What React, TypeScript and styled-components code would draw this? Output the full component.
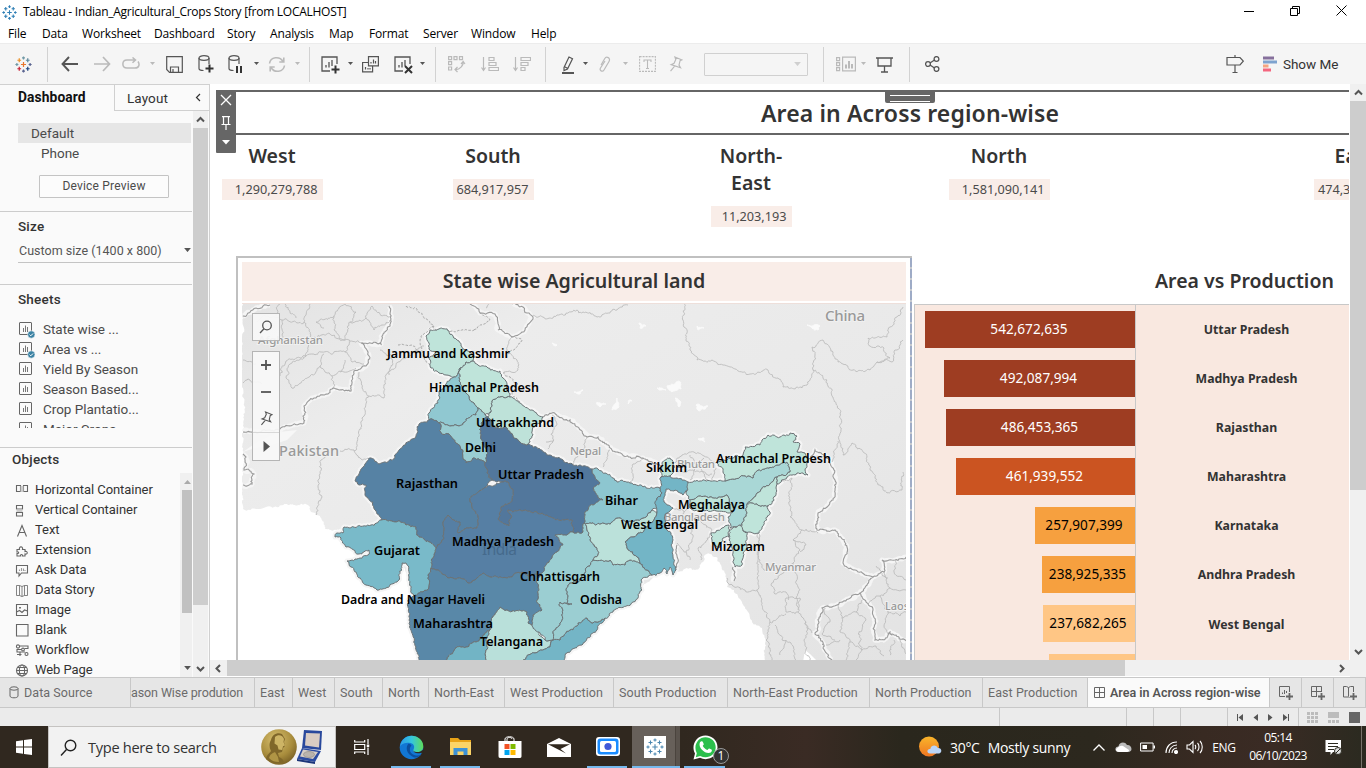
import React from 'react';
import styled, { createGlobalStyle } from 'styled-components';

const Global = createGlobalStyle`
  * { box-sizing: border-box; }
  html, body { margin: 0; padding: 0; width: 1366px; height: 768px; overflow: hidden; background: #fff; }
  svg { display: block; flex: none; }
`;

const UI = `'Open Sans', 'Noto Sans', sans-serif`;
const BENTON = `Roboto, Inter, sans-serif`;
const BOOK = `'Noto Sans', 'Open Sans', sans-serif`;

const Screen = styled.div`
  width: 1366px; height: 768px; display: flex; flex-direction: column; overflow: hidden;
  background: #fff; font-family: ${BENTON}; color: #333;
`;

/* ---------- title bar and menu ---------- */
const TitleBar = styled.header`
  height: 24px; display: flex; align-items: center; padding-left: 2px; font: 12px/24px ${UI}; color: #000;
`;
const TitleText = styled.div`
  margin-left: 6px; letter-spacing: -.27px; white-space: nowrap; flex: 1;
`;
const WindowButtons = styled.div`display: flex; align-items: center; height: 20px; padding: 0 2px 3px 0;`;
const WindowButton = styled.div`width: 46px; display: flex; justify-content: center;`;
const MenuBar = styled.nav`height: 19px; display: flex; font: 12px/19px ${UI}; color: #000; padding-left: 8px;`;
const MenuItem = styled.span<{ $w: number }>`
  width: ${p => p.$w}px; white-space: nowrap; letter-spacing: -0.15px;
`;

/* ---------- toolbar ---------- */
const ToolBar = styled.div`
  height: 41px; background: #f5f5f5; border-top: 1px solid #ececec; display: flex; align-items: center; color: #666;
`;
const ToolSlot = styled.div<{ $w: number; $faint?: boolean }>`
  width: ${p => p.$w}px; display: flex; justify-content: center; color: ${p => (p.$faint ? '#bababa' : '#555')}; flex: none;
`;
const ToolSep = styled.div`width: 1px; height: 35px; background: #d2d2d2; flex: none;`;
const ToolCombo = styled.div`
  width: 104px; height: 23px; border: 1px solid #d0d0d0; border-radius: 1px; display: flex; align-items: center;
  justify-content: flex-end; padding-right: 6px; margin: 0 15px 0 21px; color: #cfcfcf;
`;
const ShowMe = styled.div`font: 13.5px ${BENTON}; color: #333; letter-spacing: -.05px; width: 54px; white-space: nowrap;`;

/* ---------- body ---------- */
const Body = styled.div`height: 593px; display: flex; overflow: hidden;`;
const Side = styled.aside`
  width: 210px; height: 593px; background: #fafafa; border-top: 1px solid #d0d0d0; border-right: 1px solid #d0d0d0;
  display: flex; flex-direction: column; flex: none;
`;
const SideTabs = styled.div`height: 26px; display: flex;`;
const SideTab = styled.div<{ $active?: boolean }>`
  width: ${p => (p.$active ? 114 : 95)}px; padding-left: ${p => (p.$active ? 18 : 12)}px; height: 26px;
  font: ${p => (p.$active ? 'bold 13.8px' : 'normal 13.5px')}/24px ${BENTON}; color: ${p => (p.$active ? '#111' : '#333')};
  border-left: ${p => (p.$active ? 0 : 1)}px solid #d0d0d0; border-bottom: ${p => (p.$active ? 0 : 1)}px solid #d0d0d0;
  display: flex; justify-content: space-between; align-items: center; padding-right: 6px; letter-spacing: .1px;
  padding-bottom: ${p => (p.$active ? 2 : 0)}px;
`;
const SideScroll = styled.div`flex: 1; display: flex; min-height: 0;`;
const SideMain = styled.div`width: 192px; margin-right: 1px; display: flex; flex-direction: column; min-height: 0; height: 566px; overflow: hidden;`;
const VTrack = styled.div<{ $w: number }>`
  width: ${p => p.$w}px; background: #f0f0f0; display: flex; flex-direction: column; align-items: center; color: #555;
  flex: none;
`;
const VArrow = styled.div<{ $h: number }>`height: ${p => p.$h}px; display: flex; align-items: center; justify-content: center;`;
const VThumb = styled.div<{ $h: number; $c?: string }>`width: 100%; height: ${p => p.$h}px; background: ${p => p.$c ?? '#cdcdcd'};`;
const Grow = styled.div`flex: 1;`;

const DevicePane = styled.div`height: 101px; padding: 12px 1px 0 18px; border-bottom: 1px solid #ccc; flex: none;`;
const DeviceRow = styled.div<{ $on?: boolean }>`
  height: 20px; font: 13.5px/20px ${BENTON}; color: #4b4b4b; padding-left: ${p => (p.$on ? 13 : 23)}px;
  background: ${p => (p.$on ? '#e6e6e6' : 'transparent')};
`;
const PreviewButton = styled.div`
  width: 130px; height: 23px; margin: 12px 0 0 21px; border: 1px solid #c4c4c4; border-radius: 1px; background: #fcfcfc;
  font: 12px/20px ${BENTON}; color: #4b4b4b; text-align: center; letter-spacing: .2px;
`;
const SideHeading = styled.div`font: 500 13.5px/18px ${BENTON}; color: #333; letter-spacing: .2px;`;
const SizePane = styled.div`height: 73px; padding: 5px 1px 0 18px; border-bottom: 1px solid #ccc; flex: none;`;
const SizeSelect = styled.div`
  height: 25px; margin-top: 3px; border-bottom: 1px solid #c4c4c4; display: flex; align-items: center;
  justify-content: space-between; font: 12.5px ${BENTON}; color: #555; padding-left: 1px; letter-spacing: .02px;
`;
const SheetsPane = styled.div`height: 163px; padding: 5px 0 0 18px; border-bottom: 1px solid #ccc; flex: none;`;
const SheetList = styled.div`margin-top: 11px; height: 109px; overflow: hidden;`;
const SheetRow = styled.div`
  height: 20px; display: flex; align-items: center; font: 13.5px/20px ${BENTON}; color: #4b4b4b; white-space: nowrap;
  letter-spacing: -.03px;
  & > svg { margin: 0 8px 0 1px; }
`;
const ObjectsPane = styled.div`flex: 1; display: flex; min-height: 0;`;
const ObjectCol = styled.div`width: 180px; padding: 2px 0 0 12px;`;
const ObjectList = styled.div`margin-top: 12px;`;
const ObjectRow = styled.div`
  height: 20px; display: flex; align-items: center; font: 13px/20px ${BENTON}; color: #333; white-space: nowrap;
  letter-spacing: -.06px;
  & > svg { margin: 0 5px 0 3px; }
`;
const ObjectTrack = styled(VTrack)`margin-top: 25px; padding-left: 2px;`;

/* ---------- dashboard ---------- */
const Center = styled.main`width: 1140px; height: 593px; display: flex; flex-direction: column;`;
const Canvas = styled.div`height: 576px; width: 1139px; overflow: hidden; position: relative; background: #fff; display: flex; flex-direction: column;`;
const DashTitle = styled.h1`
  margin: 6px 0 0 26px; height: 45px; border-top: 2px solid #666; border-bottom: 2px solid #666;
  font: 600 23px/42px ${BOOK}; color: #333; flex: none; padding-left: 525px; white-space: nowrap; letter-spacing: .12px;
`;
const Controls = styled.div`
  position: absolute; left: 6px; top: 6px; width: 20px; height: 63px; background: #666; border-radius: 0 0 1px 1px;
  display: flex; flex-direction: column; align-items: center; justify-content: space-between; padding: 4px 1px 8px 0;
`;
const Handle = styled.div`
  position: absolute; left: 675px; top: 6px; width: 50px; height: 13px; background: #666; border-radius: 0 0 2px 2px;
  padding: 5px 5px 0; &::before { content: ''; display: block; height: 5px; border: solid #fff; border-width: 1px 0; }
`;
const Regions = styled.div`display: grid; grid-template-columns: 124px 318px 198px 298px 413px; height: 121px; flex: none; padding-top: 7px;`;
const Region = styled.div`display: flex; flex-direction: column; align-items: center;`;
const RegionName = styled.h2`
  margin: 0 0 10px; font: 600 19.5px/27px ${BOOK}; color: #333; text-align: center; max-width: 84px;
`;
const RegionValue = styled.div<{ $w: number }>`
  width: ${p => p.$w}px; height: 21px; background: #f9ede8; text-align: right; padding-right: 5px;
  font: 12.7px/21px ${BOOK}; color: #4b4b4b;
`;
const Panels = styled.div`display: flex; height: 404px; flex: none;`;
const MapPanel = styled.section`
  width: 676px; margin-left: 26px; border: 2px solid #c0c0c0; border-right: 0; border-bottom: 0; padding: 4px 6px 0 4px;
  background: repeating-linear-gradient(#9eabc6 0 9px, #c6c9ce 9px 11px) right / 2px 100% no-repeat;
`;
const MapTitle = styled.h3`
  margin: 0 0 2px; height: 39px; background: #f9ede8; font: 600 19.6px/38px ${BOOK}; text-align: center; color: #333;
`;
const MapFrame = styled.div`border-top: 1px solid #eedfda; position: relative; height: 358px;`;
const MapTools = styled.div<{ $top: number; $h: number }>`
  position: absolute; left: 10px; top: ${p => p.$top}px; width: 28px; height: ${p => p.$h}px; border: 1px solid #b5b5b5;
  background: rgba(247,247,247,.93); display: flex; flex-direction: column; align-items: center; justify-content: space-around;
  color: #555;
`;
const MapTool = styled.div<{ $line?: boolean }>`
  width: 26px; flex: 1; display: flex; align-items: center; justify-content: center;
  border-top: ${p => (p.$line ? '1px solid #d8d8d8' : '0')};
`;
const ChartPanel = styled.section`width: 447px; margin-left: 2px; flex: none; overflow: hidden;`;
const ChartTitle = styled.h3`
  margin: 0; height: 48px; padding: 4px 0 0 241px; font: 600 19.5px/42px ${BOOK}; color: #333; white-space: nowrap;
`;
const Chart = styled.div`border: solid #c8c8c8; border-width: 1px 0 0 1px; background: #f9e8e0; height: 360px;`;
const BarRow = styled.div`height: 49.1px; display: flex;`;
const BarCell = styled.div`
  width: 221px; border-right: 1px solid #c8c8c8; display: flex; justify-content: flex-end; align-items: center; padding-bottom: 1px;
`;
const Bar = styled.div<{ $w: number; $c: string; $dark?: boolean }>`
  width: ${p => p.$w}px; height: 37px; background: ${p => p.$c}; color: ${p => (p.$dark ? '#000' : '#fff')};
  font: 13.6px/36px ${BOOK}; text-align: center; padding-right: 2px;
`;
const BarLabel = styled.div`width: 221px; text-align: center; font: bold 12.3px/49px ${BOOK}; color: #333;`;

const HScroll = styled.div`height: 17px; background: #fff; display: flex; color: #555; width: 1140px;`;
const HArrow = styled.div<{ $w: number }>`width: ${p => p.$w}px; height: 16px; background: #f0f0f0; display: flex; align-items: center; justify-content: center;`;
const HThumb = styled.div`width: 898px; height: 16px; background: #cdcdcd;`;
const HTrack = styled.div`flex: 1; height: 16px; background: #f0f0f0;`;

/* ---------- sheet tabs and status ---------- */
const SheetTabs = styled.div`
  height: 31px; background: #e6e6e6; border-top: 1px solid #c8c8c8; border-bottom: 1px solid #c8c8c8; display: flex; flex: none;
`;
const SheetTab = styled.div<{ $w: number; $on?: boolean; $clip?: boolean; $src?: boolean }>`
  width: ${p => p.$w}px; border-right: 1px solid #c8c8c8; background: ${p => (p.$on ? '#fafafa' : '#e6e6e6')};
  font: ${p => (p.$on ? '600 12.5px' : '12.5px')}/30px ${BENTON}; color: ${p => (p.$on ? '#555' : '#6b6b6b')}; white-space: nowrap; overflow: hidden;
  display: flex; align-items: center; padding-left: ${p => (p.$src ? 9 : p.$clip ? 0 : p.$on ? 6 : 5)}px; gap: 5px; flex: none;
  letter-spacing: ${p => (p.$on ? 0 : p.$clip ? -0.1 : 0.07)}px;
`;
const AddTab = styled.div<{ $w: number }>`width: ${p => p.$w}px; border-right: 1px solid #c8c8c8; display: flex; align-items: center; justify-content: center; flex: none;`;
const Status = styled.div`height: 18px; background: #ebebeb; display: flex; flex: none;`;
const StatusCell = styled.div<{ $w: number }>`
  width: ${p => p.$w}px; border-right: 1px solid #c8c8c8; display: flex; align-items: center; justify-content: center; flex: none; gap: 10px;
`;

/* ---------- windows taskbar ---------- */
const TaskBar = styled.footer`
  height: 42px; display: flex; color: #fff; flex: none; font-family: ${UI};
  background: linear-gradient(90deg, #30281f 0%, #30281f 50%, #3a2b24 59%, #2a271d 66%, #2c281e 80%, #382a22 88%, #3a2b24 93%, #2b2a20 100%);
`;
const TaskItem = styled.div<{ $w: number; $run?: boolean; $on?: boolean }>`
  width: ${p => p.$w}px; display: flex; align-items: center; justify-content: center; flex: none; position: relative;
  background: ${p => (p.$on ? 'linear-gradient(90deg,#67605a 0 43px,#4b443e 43px 44px,#5a534d 44px)' : 'transparent')};
  &::after { content: ''; display: ${p => (p.$run ? 'block' : 'none')}; position: absolute; bottom: 0; left: ${p => (p.$on ? 0 : 4)}px;
    right: ${p => (p.$on ? 0 : 5)}px; height: 2px; background: #76b9ed; }
`;
const SearchBox = styled.div`
  width: 288px; height: 42px; border: 1px solid #c5c3c1; background: #f2f2f2; display: flex; align-items: center; color: #333;
  font: 14.6px ${UI}; padding: 0 3px 0 11px;
`;
const SearchText = styled.span`flex: 1; margin-left: 11px; letter-spacing: -.3px;`;
const Badge = styled.div`
  position: absolute; right: 1px; bottom: 4px; width: 16px; height: 16px; border-radius: 50%; border: 1px solid #999; background: #333;
  font: 12px/14px ${UI}; text-align: center; color: #fff;
`;
const Weather = styled.div`width: 184px; margin-left: 173px; display: flex; align-items: center; font-size: 14px; padding-left: 16px; gap: 8px; flex: none; letter-spacing: -.3px; white-space: nowrap;`;
const TrayText = styled.div`width: 38px; text-align: center; font-size: 12px; line-height: 43px; letter-spacing: -.3px; flex: none;`;
const Clock = styled.div`width: 70px; text-align: center; font: 12px/18px ${UI}; letter-spacing: -.6px; padding-top: 3px; flex: none;`;
const PeekLine = styled.div`width: 5px; border-left: 1px solid #77736b; margin-left: auto;`;

/* ---------- icons ---------- */
const Caret = ({ s = 6 }: { s?: number }) => (
  <svg width={s} height={s / 2 + 1} viewBox="0 0 6 4"><path d="M0 0h6L3 3.6z" fill="currentColor" /></svg>
);
const Cross = ({ x, y, r, c, w = 1.2 }: { x: number; y: number; r: number; c: string; w?: number }) => (
  <path d={`M${x - r} ${y}h${r * 2}M${x} ${y - r}v${r * 2}`} stroke={c} strokeWidth={w} />
);
const TableauMark = ({ size, mono, w = 1.2 }: { size: number; mono?: string; w?: number }) => {
  const c = (v: string) => mono ?? v;
  return (
    <svg width={size} height={size} viewBox="0 0 18 18">
      <Cross x={9} y={9} r={2.7} c={c('#e8762d')} w={w} />
      <Cross x={9} y={2} r={1.6} c={c('#7199a6')} w={w} />
      <Cross x={9} y={16} r={1.6} c={c('#5b6591')} w={w} />
      <Cross x={2} y={9} r={1.6} c={c('#7199a6')} w={w} />
      <Cross x={16} y={9} r={1.6} c={c('#5b6591')} w={w} />
      <Cross x={4.5} y={4.5} r={2} c={c('#eb9129')} w={w} />
      <Cross x={13.5} y={4.5} r={2} c={c('#5b879b')} w={w} />
      <Cross x={4.5} y={13.5} r={2} c={c('#c72035')} w={w} />
      <Cross x={13.5} y={13.5} r={2} c={c('#1f447e')} w={w} />
    </svg>
  );
};
type Kids = { w?: number; h?: number; sw?: number; children: React.ReactNode };
const Line = ({ w = 18, h = 18, sw = 1.2, children }: Kids) => (
  <svg width={w} height={h} viewBox={`0 0 ${w} ${h}`} fill="none" stroke="currentColor" strokeWidth={sw}>{children}</svg>
);
const PinShape = ({ size = 13 }: { size?: number }) => (
  <svg width={size} height={size * 1.15} viewBox="0 0 13 15" fill="none" stroke="currentColor" strokeWidth="1.1">
    <path d="M5.500 1l6.500 2.600-1.700.8-1 4.100 1.400 2.400L2 8l2.700-1.200 1.600-3.600zM5.200 9.400L1.400 14" />
  </svg>
);
const Chevron = ({ d, s = 2 }: { d: 'u' | 'd' | 'l' | 'r'; s?: number }) => {
  const p = { u: 'M1 6.5L4.5 3 8 6.5', d: 'M1 3l3.500 3.500L8 3', l: 'M6 1L2.500 4.500 6 8', r: 'M3 1l3.500 3.500L3 8' }[d];
  return <svg width="9" height="9" viewBox="0 0 9 9" fill="none" stroke="currentColor" strokeWidth={s}><path d={p} /></svg>;
};
const SheetIcon = ({ used }: { used?: boolean }) => (
  <svg width="16" height="20" viewBox="0 0 16 20" fill="none" stroke="#666">
    <rect x=".5" y="3.500" width="12" height="12" rx=".5" />
    <path d="M4.500 9v4M6.500 6.500V13M8.500 8v5" strokeWidth=".9" />
    {used && <><circle cx="12.300" cy="15.500" r="3.700" fill="#3b82a3" stroke="#fafafa" strokeWidth=".6" /><path d="M10.600 15.600l1.200 1.200 2.200-2.300" stroke="#fff" /></>}
  </svg>
);
const Cylinder = ({ extra }: { extra: React.ReactNode }) => (
  <Line w={18} h={20}><ellipse cx="7" cy="4" rx="5" ry="2.300" /><path d="M2 4v10.500c0 1.200 2 2 4.500 2M12 4v6" />{extra}</Line>
);
const objectIcons: Record<string, React.ReactNode> = {
  'Horizontal Container': <><path d="M1.500 2.500h4v6h-4zM8.500 2.500h4v6h-4z" /><path d="M5.500 3h3v6h-3z" fill="#ccc" stroke="none" /></>,
  'Vertical Container': <><path d="M1.500 2.500h6v3.500h-6zM1.500 9.500h6v3.500h-6z" /><path d="M1.500 6.500h6v2.500h-6z" fill="#ccc" stroke="none" /></>,
  Text: <path d="M2.500 13.500L7 2.500l4.500 11M4 9.500h6" />,
  Extension: <path d="M2 6.500h2.500c-1-3.500 4-3.500 3 0H10v2c3-1 3 3.500 0 2.500V13H7.500c.5-1.800-2.500-1.800-2 0H2v-2.500c2.200.4 2.200-2 0-1.600z" />,
  'Ask Data': <><path d="M1.500 2.500h11v7.500H6.500L4 13v-3H1.500z" /><path d="M4.500 8V6.500M6.500 8V5M8.500 8V5.500M10 8V7" stroke="#999" /></>,
  'Data Story': <path d="M1.500 2.500h3l2.500 1 2.500-1h3v10h-3l-2.500 1-2.500-1h-3zM4.500 2.500v10M9.500 2.500v10M7 3.500v10" strokeWidth=".8" />,
  Image: <><path d="M1.500 1.500h11v11h-11zM1.500 9l3-1.500 2.500 2L9.500 7l3 1" /><path d="M5 4v1.500" strokeWidth="1.800" /></>,
  Blank: <path d="M1.500 1.500h11.500v11.500H1.500z" />,
  Workflow: <><circle cx="3" cy="3.500" r="1.600" /><circle cx="8" cy="6.500" r="1.400" /><circle cx="11.500" cy="11" r="1.500" /><path d="M4.500 3H13v2.500H9.500M6.500 6.500H2v2.500h8M2 11.500h4.500M5 9v4" /></>,
  'Web Page': <><circle cx="7" cy="7.500" r="5.500" /><ellipse cx="7" cy="7.500" rx="2.600" ry="5.500" /><path d="M1.500 7.500h11M2.500 4.500h9M2.500 10.500h9" /></>,
};

/* ---------- map geometry ---------- */
type Pt = [number, number];
const parse = (s: string): Pt[] => s.trim().split(/\s+/).map(p => p.split(',').map(Number) as Pt);

// Offset that depends only on the segment, so neighbouring states share one wobbly border.
const noise = (a: Pt, b: Pt) => {
  const v = Math.sin((a[0] + b[0]) * 12.9898 + (a[1] + b[1]) * 78.233) * 43758.5453;
  return (v - Math.floor(v)) * 2 - 1;
};
const wobble = (a: Pt, b: Pt, amp: number, out: Pt[]) => {
  const dx = b[0] - a[0];
  const dy = b[1] - a[1];
  const len = Math.hypot(dx, dy);
  if (len < 2.2) { out.push(b); return; }
  const n = noise(a, b) * Math.min(len * 0.26, 1.3) * amp * (a[0] < b[0] || (a[0] === b[0] && a[1] < b[1]) ? 1 : -1);
  const m: Pt = [(a[0] + b[0]) / 2 - (dy / len) * n, (a[1] + b[1]) / 2 + (dx / len) * n];
  wobble(a, m, amp, out);
  wobble(m, b, amp, out);
};
const trace = (s: string, closed = false, amp = 1) => {
  const pts = parse(s);
  if (closed) pts.push(pts[0]);
  const out: Pt[] = [pts[0]];
  for (let i = 1; i < pts.length; i++) wobble(pts[i - 1], pts[i], amp, out);
  return 'M' + out.map(p => `${p[0].toFixed(1)} ${p[1].toFixed(1)}`).join('L') + (closed ? 'Z' : '');
};

const LAND = '243,300 910,300 910,664 763,664 765,643 762,628 752,622 748,612 742,602 734,590 727,587 725,573 721,565 716,557 710,554 704,556 700,567 695,570 690,568 677,571 660,573 640,585 600,600 560,620 480,620 420,600 405,570 380,545 350,535 343,530 334,530 325,529 322,520 320,516 316,515 310,510 308,505 306,504 288,505 279,507 266,507 258,509 243,509';

const STATES: { c: string; p: string }[] = [
  { c: '#bfe4da', p: '426,336 430,330 439,329 449,331 453,336 459,341 461,346 468,351 474,357 473,361 466,362 460,368 454,377 446,375 439,373 431,368 429,359 436,353 429,349 429,343' },
  { c: '#bfe4da', p: '460,368 466,362 473,361 478,365 488,368 500,371 503,378 507,385 510,397 498,397 492,401 491,412 485,415 478,408 474,403 466,393 459,381' },
  { c: '#90c8d1', p: '454,377 460,368 459,381 466,393 474,403 478,408 476,415 466,419 459,426 451,426 439,423 429,420 429,413 438,403 439,391 446,384' },
  { c: '#9acdd2', p: '439,423 451,426 459,426 466,419 476,415 478,408 485,415 488,417 481,423 482,440 487,450 485,463 480,460 473,458 466,463 463,459 463,451 456,443 449,434 441,433' },
  { c: '#bee2d9', p: '491,412 492,401 498,397 510,397 520,403 532,410 543,417 542,422 533,427 533,435 528,444 520,442 510,433 507,428 495,428 493,423 488,417' },
  { c: '#5682a4', p: '429,420 419,424 416,436 403,446 394,459 379,464 371,458 365,464 355,480 359,485 366,485 365,495 373,502 375,510 381,520 398,521 406,525 416,527 419,537 429,542 436,548 444,538 443,522 448,515 452,519 460,522 458,533 466,528 477,528 478,517 472,507 470,500 484,488 492,480 487,473 485,463 480,460 473,458 466,463 463,459 463,451 456,443 449,434 441,433 439,423' },
  { c: '#52779c', p: '488,417 493,423 495,428 507,428 510,433 520,442 528,444 550,455 573,465 592,469 595,477 600,483 593,488 598,497 603,500 593,505 585,512 584,523 582,533 573,532 572,520 553,518 547,515 537,512 522,511 513,512 508,510 511,518 509,526 504,524 498,519 500,512 503,506 512,500 513,490 508,482 502,482 492,480 487,473 485,463 487,450 482,440 481,423' },
  { c: '#567fa4', p: '502,482 508,482 513,490 512,500 503,506 500,512 498,519 504,524 509,526 511,518 508,510 513,512 522,511 537,512 547,515 553,518 572,520 573,532 568,534 555,535 563,545 557,552 552,558 547,563 540,574 527,575 520,573 507,578 490,577 483,573 477,578 468,583 463,579 449,578 436,570 431,568 433,558 436,548 444,538 443,522 448,515 452,519 460,522 458,533 466,528 477,528 478,517 472,507 470,500 484,488' },
  { c: '#79bac9', p: '344,527 371,525 381,520 398,521 406,525 416,527 419,537 429,542 436,548 433,558 431,568 428,575 429,587 423,592 414,596 411,590 409,577 406,563 402,563 399,580 379,590 366,585 351,567 347,561 355,559 368,555 369,550 359,554 346,547 341,538 335,537 337,533 343,533' },
  { c: '#5988a8', p: '414,596 423,592 429,587 428,575 431,568 436,570 449,578 463,579 468,583 477,578 483,573 490,577 507,578 520,573 527,575 540,574 537,583 537,600 542,610 533,615 532,625 528,623 527,612 507,610 500,607 493,617 490,630 485,633 476,642 466,647 456,648 443,664 419,664 416,647 409,620 408,600' },
  { c: '#72b4c5', p: '443,664 456,648 466,647 476,642 485,633 490,630 486,640 486,664' },
  { c: '#b9e0da', p: '490,630 493,617 500,607 507,610 527,612 528,623 532,625 542,637 545,640 553,640 550,647 535,653 518,664 486,664 486,640' },
  { c: '#74b5c6', p: '518,664 535,653 550,647 553,640 560,640 570,630 587,618 593,623 605,618 597,630 582,645 567,653 565,664' },
  { c: '#9bced2', p: '555,535 568,534 573,532 582,533 584,523 587,530 590,540 595,547 598,555 593,560 587,567 585,573 577,582 568,585 567,603 572,604 560,602 563,610 560,623 553,633 553,640 545,640 533,627 532,625 533,615 542,610 537,600 537,583 540,574 547,563 552,558 557,552 563,545' },
  { c: '#9bced2', p: '593,560 610,560 613,565 625,565 630,560 640,563 647,570 652,575 641,580 642,590 633,602 613,612 605,618 593,623 587,618 570,630 560,640 553,640 553,633 560,623 563,610 560,602 572,604 567,603 568,585 577,582 585,573 587,567' },
  { c: '#bbe1da', p: '584,523 607,524 617,518 628,522 643,518 652,510 657,512 654,520 647,527 633,537 625,542 627,548 637,557 640,563 630,560 625,565 613,565 610,560 593,560 598,555 595,547 590,540 587,530' },
  { c: '#8dc6d0', p: '592,469 598,469 605,473 613,478 617,482 630,483 643,487 660,488 662,493 657,498 657,508 652,510 643,518 628,522 617,518 607,524 584,523 585,512 593,505 603,500 598,497 593,488 600,483 595,477' },
  { c: '#73b5c6', p: '661,477 670,476 677,478 688,482 688,490 683,495 675,490 666,489 664,497 664,502 673,508 667,513 665,520 667,530 673,540 673,557 676,570 673,575 670,567 667,574 664,568 660,573 652,575 647,570 640,563 637,557 627,548 625,542 633,537 647,527 654,520 657,512 657,498 662,493 660,488' },
  { c: '#bfe4da', p: '661,477 662,463 670,458 673,463 672,474 670,476' },
  { c: '#a9d7d6', p: '688,482 700,481 725,481 740,477 753,478 758,470 777,465 787,462 790,472 777,477 765,487 757,493 747,504 747,513 742,525 730,528 728,517 733,512 729,503 727,495 710,497 697,497 690,500 686,492' },
  { c: '#bfe4da', p: '697,497 710,497 727,495 729,503 733,512 703,510 690,508 690,500' },
  { c: '#bfe4da', p: '725,481 723,472 717,463 733,458 743,455 745,447 760,445 762,440 768,435 780,437 790,433 797,436 793,442 800,444 797,452 805,453 808,460 805,470 808,475 803,473 797,473 787,477 777,484 777,477 790,472 787,462 777,465 758,470 753,478 740,477' },
  { c: '#bfe4da', p: '777,477 777,484 776,488 774,500 768,506 757,504 747,504 757,493 765,487' },
  { c: '#bfe4da', p: '747,504 757,504 768,506 770,512 762,527 759,533 743,531 742,525 747,513' },
  { c: '#bfe4da', p: '729,530 740,525 743,531 747,532 747,547 743,553 742,565 735,567 733,553 729,540' },
  { c: '#bfe4da', p: '712,540 711,533 722,528 729,525 729,537 723,538 720,547 715,545' },
];

const BORDERS = [
  '243,432 279,430 304,423 304,406 314,398 328,394 334,388 351,391 354,371 366,366 369,356 361,343 381,344 383,334 391,319 389,306',
  '470,302 480,313 495,314 498,330 512,337 525,330 533,317 523,307 512,304',
  '552,413 570,420 587,437 598,437 612,450 630,457 643,458 652,462 661,466',
  '543,417 552,413',
  '808,460 815,450 830,460 835,480 833,500 818,513 817,530 835,530 847,547 843,563 865,575 873,577 860,593 837,605 822,608 818,627 815,633 832,660',
  '873,577 884,572 882,560 895,560 906,557',
  '860,593 873,610 875,640 884,640 890,632 906,641',
  '243,316 256,308 270,305',
  '243,454 246,457 244,470 254,474 252,484 243,485',
  '733,567 734,581', '677,545 676,570',
];
const PROVINCES = [
  '533,315 553,318 577,310 597,317 617,310 628,305',
  '685,302 683,320 687,333 690,350 697,360 723,365 750,374 768,370 778,378 783,387 802,388 810,380 813,370 815,355 812,347 823,340 833,352 838,362 853,370 870,370 877,362 890,358 884,348 870,346 868,338 887,337 890,327 897,317 903,307',
  '813,370 827,380 833,397 840,413 840,443 843,455 852,443 867,457 875,477 887,493 902,490 903,472',
  '877,362 892,362 897,350 903,340', '838,441 834,453 832,462',
  '354,451 359,436 364,416 369,396 384,398 386,375 398,362 424,346', '321,460 318,487 322,497 316,515', '340,451 354,450 361,459 371,458',
  '369,396 362,388 359,372', '321,460 330,452',
  '282,320 304,322 310,304', '304,322 312,338 330,334 345,340 361,343', '256,322 268,316 282,320 285,340 300,344 310,338',
  '285,304 290,312 296,318', '316,322 334,316 345,304', '345,304 356,312 350,322 366,318 372,306', '366,318 374,330 390,320',
  '334,316 334,330 345,340', '310,338 306,356 290,364 286,378 294,388 310,376 320,366 332,376 333,388', '286,361 306,356 322,352 345,352 350,340',
  '320,366 324,354', '345,352 352,362 364,364', '350,322 345,340', '280,304 276,316', '340,372 345,360', '356,368 344,372 332,376',
  '243,383 250,380 262,384', '243,360 256,364', '286,361 280,376', '380,350 392,356 389,375', '372,306 380,314 391,316', '324,328 316,322',
  '512,337 507,350 517,360 518,370 504,372', '490,300 486,308',
  '552,415 557,424 551,434 553,442 548,449', '587,437 585,447 573,465', '610,450 603,467', '643,458 633,464 630,483', '554,440 546,442',
  '675,463 682,455 694,452 704,456 717,463', '690,455 695,464 690,480', '704,458 701,468 708,480', '678,472 690,470 712,474', '716,468 712,480',
  '676,520 690,525 700,520 712,530', '690,525 692,542 686,552 690,560', '712,530 706,541 698,548 701,560', '686,552 677,543', '672,508 684,512 690,508', '684,512 682,524',
  '777,484 792,478 790,500 790,517 802,530 793,540 800,550 793,563 798,587 798,610', '758,533 758,567 757,590 770,622 766,640 772,660',
  '728,583 745,590 757,590', '793,563 780,575 771,585 775,594 786,592 788,600', '802,530 818,533', '793,540 806,545 800,552', '758,533 760,560 766,570',
  '786,598 800,598 798,612 786,612 786,598', '770,622 786,614', '798,612 806,622 812,633', '806,622 804,640 810,660', '775,625 782,640 790,642 796,660',
  '825,608 830,622 822,634 835,640', '838,605 842,618 856,612 866,620', '842,618 840,632 850,642 846,660', '856,612 862,600', '866,620 858,634 862,650 856,660',
  '850,642 862,650 876,646 884,656', '884,572 890,588 880,596 868,604', '890,588 906,590', '880,596 888,612 900,616 906,612', '888,612 884,626 892,636',
  '876,566 888,578', '896,560 894,572 906,580', '894,640 890,655', '900,640 906,654', '780,655 786,640', '826,645 840,640', '728,583 727,578',
];
const DISPUTED = ['406,306 416,308 423,316 430,324 436,330 452,331 474,330', '434,326 421,336 424,359 433,369 440,373', '474,330 490,320 480,313', '512,337 522,340 516,348 508,354', '504,372 518,384 512,394 520,402', '398,345 412,345 421,352'];
const LAKES = ['552,343 557,345 556,346', '574,392 583,390 580,394', '597,402 606,404 600,407', '612,410 617,398 619,407', '657,388 666,390 659,390', '667,386 679,381 681,389 672,392', '675,398 681,403 679,407', '696,405 708,406 699,411', '807,325 820,326 818,330', '697,326 704,328 698,330', '698,439 704,438 705,442', '639,323 646,326 640,328', '628,404 632,401 630,400'];
const REGION_LABELS: [string, number, number, number, number][] = [
  ['Afghanistan', 258, 344, 65, 11.5], ['Pakistan', 279, 456, 60, 14.5], ['China', 825, 321, 40, 15], ['Nepal', 570, 455, 31, 11.5],
  ['Bhutan', 677, 468, 38, 11.5], ['Bangladesh', 664, 521, 61, 11.5], ['Myanmar', 765, 571, 51, 11.5], ['Laos', 885, 610, 24, 11],
];
const STATE_LABELS: [string, number, number, number][] = [
  ['Jammu and Kashmir', 387, 358, 123], ['Himachal Pradesh', 429, 392, 110], ['Uttarakhand', 476, 427, 78], ['Delhi', 465, 452, 31],
  ['Rajasthan', 396, 488, 62], ['Uttar Pradesh', 498, 479, 86], ['Bihar', 605, 505, 33], ['Sikkim', 646, 472, 41],
  ['Arunachal Pradesh', 716, 463, 115], ['Meghalaya', 678, 509, 67], ['West Bengal', 621, 529, 77], ['Mizoram', 711, 551, 54],
  ['Gujarat', 374, 555, 46], ['Madhya Pradesh', 452, 546, 102], ['Chhattisgarh', 520, 581, 80], ['Dadra and Nagar Haveli', 341, 604, 144],
  ['Odisha', 580, 604, 42], ['Maharashtra', 413, 628, 80], ['Telangana', 480, 646, 63],
];

const LandMap = () => (
  <svg width="664" height="356" viewBox="242 304 664 356" fill="none">
    <defs>
      <linearGradient id="relief" x1="0" y1="0" x2="1" y2="1">
        <stop offset="0" stopColor="#e3e3e3" /><stop offset=".25" stopColor="#ececec" /><stop offset=".6" stopColor="#e9e9e9" /><stop offset="1" stopColor="#e3e3e3" />
      </linearGradient>
    </defs>
    <rect x="242" y="304" width="664" height="356" fill="#fff" />
    <path d={trace(LAND, true)} fill="url(#relief)" />
    <path d="M243 452l14-10 22-10 18-2-10 10-18 6-14 2z" fill="#f7f7f7" />
    <path d="M803 662l2-12 5 4 8 8z" fill="#fff" />
    {LAKES.map(l => <path key={l} d={trace(l, true)} fill="#fafafa" stroke="#fafafa" />)}
    <g stroke="#f5f5f5" strokeWidth="5" strokeLinejoin="round">
      {BORDERS.map(b => <path key={b} d={trace(b)} />)}
      {STATES.map((s, i) => <path key={i} d={trace(s.p, true)} />)}
    </g>
    <g stroke="#bcbcbc" strokeWidth=".9">{PROVINCES.map(b => <path key={b} d={trace(b, false, 1.2)} />)}</g>
    <g stroke="#aaa" strokeWidth="1" strokeDasharray="2.500 1.500">{DISPUTED.map(b => <path key={b} d={trace(b)} />)}</g>
    <g stroke="#9a9a9a" strokeWidth="1.100">{BORDERS.map(b => <path key={b} d={trace(b, false, 1.1)} />)}</g>
    <g fontFamily="Noto Sans" fontWeight="500" fill="#999" stroke="#f0f0f0" strokeWidth="2" paintOrder="stroke">
      {REGION_LABELS.map(([t, x, y, w, s]) => <text key={t} x={x} y={y} fontSize={s} textLength={w}>{t}</text>)}
    </g>
    <g stroke="#6c7376" strokeWidth="1" strokeLinejoin="round">
      {STATES.map((s, i) => <path key={i} d={trace(s.p, true)} fill={s.c} />)}
    </g>
    <text x="482" y="555" fontFamily="Noto Sans" fontSize="15.500" textLength="35" fill="#456a8c">India</text>
    <g fontFamily="Noto Sans" fontWeight="600" fontSize="13" fill="#000">
      {STATE_LABELS.map(([t, x, y, w]) => <text key={t} x={x} y={y} textLength={w} lengthAdjust="spacingAndGlyphs">{t}</text>)}
    </g>
  </svg>
);

/* ---------- data ---------- */
const MENU: [string, number][] = [['File', 34], ['Data', 40], ['Worksheet', 72], ['Dashboard', 73], ['Story', 43], ['Analysis', 59], ['Map', 40], ['Format', 54], ['Server', 48], ['Window', 60], ['Help', 40]];
const BARS: [string, string, number, string, boolean][] = [
  ['542,672,635', 'Uttar Pradesh', 210, '#9e3d22', false], ['492,087,994', 'Madhya Pradesh', 191, '#9e3d22', false],
  ['486,453,365', 'Rajasthan', 189, '#9e3d22', false], ['461,939,552', 'Maharashtra', 179, '#cb5421', false],
  ['257,907,399', 'Karnataka', 100, '#f6a03f', true], ['238,925,335', 'Andhra Pradesh', 93, '#f6a03f', true],
  ['237,682,265', 'West Bengal', 92, '#ffc685', true], ['', '', 86, '#ffc685', true],
];
const REGIONS: [string, string, number][] = [
  ['West', '1,290,279,788', 101], ['South', '684,917,957', 81], ['North-East', '11,203,193', 81], ['North', '1,581,090,141', 101], ['East', '474,393,225', 81],
];
const TABS: [string, number][] = [['East', 38], ['West', 42], ['South', 48], ['North', 46], ['North-East', 76], ['West Production', 109], ['South Production', 114], ['North-East Production', 142], ['North Production', 113], ['East Production', 105]];

export default function App() {
  return (
    <Screen>
      <Global />
      <TitleBar>
        <TableauMark size={15} mono="#2f7fb5" w={1.3} />
        <TitleText>Tableau - Indian_Agricultural_Crops Story [from LOCALHOST]</TitleText>
        <WindowButtons>
          <WindowButton><svg width="10" height="10"><path d="M0 5.500h10" stroke="#000" /></svg></WindowButton>
          <WindowButton><svg width="10" height="10" fill="none" stroke="#000"><path d="M.5 2.500h7v7h-7zM2.500 2.500v-2h7v7h-2" /></svg></WindowButton>
          <WindowButton><svg width="11" height="11" stroke="#000"><path d="M.5.500l10 10M10.500.500l-10 10" /></svg></WindowButton>
        </WindowButtons>
      </TitleBar>
      <MenuBar>{MENU.map(([t, w]) => <MenuItem key={t} $w={w}>{t}</MenuItem>)}</MenuBar>

      <ToolBar>
        <ToolSlot $w={47}><TableauMark size={17} w={1.3} /></ToolSlot>
        <ToolSep />
        <ToolSlot $w={43}><Line w={17} h={16} sw={1.9}><path d="M8 1L1.500 8 8 15M1.500 8H17" /></Line></ToolSlot>
        <ToolSlot $w={22} $faint><Line w={17} h={16} sw={1.7}><path d="M9 1l6.500 7L9 15M15.500 8H0" /></Line></ToolSlot>
        <ToolSlot $w={36} $faint><Line w={18} h={14} sw={1.5}><path d="M13 3H5C-.5 3-.5 11 5 11h8c4 0 5-3.500 3-6.500M10.500.500L13.500 3l-3 2.800" /></Line></ToolSlot>
        <ToolSlot $w={6} $faint><Caret s={5} /></ToolSlot>
        <ToolSlot $w={38}><Line w={17} h={17}><path d="M.7.700h15.600v15.600H3.500L.7 13.500zM4.500 16V11h8v5M7 13v3" /></Line></ToolSlot>
        <ToolSlot $w={25}><Cylinder extra={<path d="M12.500 10.500v8M8.500 14.500h8" strokeWidth="2" stroke="#333" />} /></ToolSlot>
        <ToolSlot $w={36}><Cylinder extra={<path d="M10 12v7M14 12v7" strokeWidth="2" stroke="#333" />} /></ToolSlot>
        <ToolSlot $w={5}><Caret s={5} /></ToolSlot>
        <ToolSlot $w={35} $faint><Line w={18} h={17} sw={1.6}><path d="M1.500 7.500C2.500 1 11.500-.5 15 5.500M16.500 9.500C15.500 16 6.500 17.500 3 11.500M15.800 1.500v4.500h-4.500M2.200 15.500V11h4.500" /></Line></ToolSlot>
        <ToolSlot $w={6} $faint><Caret s={5} /></ToolSlot>
        <ToolSlot $w={9} />
        <ToolSep />
        <ToolSlot $w={40}><Line w={19} h={19} sw={1.3}><path d="M9 16H1V2h15v7M5 12.500V10M8 12.500V7M11 11V5" /><path d="M14.500 10.500v8M10.500 14.500h8" strokeWidth="2" stroke="#333" /></Line></ToolSlot>
        <ToolSlot $w={1}><Caret s={5} /></ToolSlot>
        <ToolSlot $w={39}><Line w={17} h={17}><path d="M6.500.600h9.900v9.300H6.500zM6.500 6.500H.6v9.300h10V10M9 7.500V6M11.500 7.500V3.500M13.500 7.500V5M3.500 13.500V11M6 13.500V12M8 13.500V12" /></Line></ToolSlot>
        <ToolSlot $w={26}><Line w={19} h={19} sw={1.3}><path d="M9 16H1V2h15v7M5 12.500V10M8 12.500V7M11 11V5" /><path d="M11 11l7 7M18 11l-7 7" strokeWidth="2" stroke="#333" /></Line></ToolSlot>
        <ToolSlot $w={13}><Caret s={5} /></ToolSlot>
        <ToolSlot $w={6} />
        <ToolSep />
        <ToolSlot $w={42} $faint><Line w={18} h={18}><path d="M.6 1.600h3v3h-3zM6 1.600h3v3H6zM11.500 1.600h3v3h-3zM.6 6.600h3v3h-3zM.6 12h3v3h-3zM15 6.500c1 4-3.500 8.500-8 8M13 9l2.200-2.500L17 9M9.500 12l-2.500 2.500L9.500 17" /></Line></ToolSlot>
        <ToolSlot $w={24} $faint><Line w={18} h={16}><path d="M2.500 1v13M.5 11.500L2.500 14.500l2-3M8 1.500h5v3H8zM8 6.500h7v3H8zM8 11.500h9.500v3H8z" /></Line></ToolSlot>
        <ToolSlot $w={40} $faint><Line w={18} h={16}><path d="M2.500 1v13M.5 11.500L2.500 14.500l2-3M8 1.500h9.500v3H8zM8 6.500h7v3H8zM8 11.500h4v3H8z" /></Line></ToolSlot>
        <ToolSlot $w={3} />
        <ToolSep />
        <ToolSlot $w={15} />
        <ToolSlot $w={14}><Line w={14} h={19}><path d="M3 12.500L8 2l3.500 1.700L6.500 14 3 15.500zM3 11.500l4 2" /><path d="M1 18h12" strokeWidth="2" /></Line></ToolSlot>
        <ToolSlot $w={21}><Caret s={5} /></ToolSlot>
        <ToolSlot $w={18} $faint><Line w={14} h={17}><path d="M3 9l3.500-6c2-3.500 6.500-1 4.500 2.500L6 14c-1.500 2.500-5 .5-3.500-2L7 5" /></Line></ToolSlot>
        <ToolSlot $w={23} $faint><Caret s={5} /></ToolSlot>
        <ToolSlot $w={21} $faint><Line w={17} h={16} sw={1.1}><path d="M.6.600h15.800v14.800H.6z" strokeDasharray="2 1" /><path d="M5 6V4h7v2M8.500 4v8.500M7 12.500h3" /></Line></ToolSlot>
        <ToolSlot $w={11} />
        <ToolSlot $w={14} $faint><PinShape size={14} /></ToolSlot>
        <ToolCombo><Caret s={7} /></ToolCombo>
        <ToolSep />
        <ToolSlot $w={12} />
        <ToolSlot $w={20} $faint><Line w={20} h={16}><path d="M.6 1.600h3v3h-3zM.6 6.600h3v3h-3zM.6 11.600h3v3h-3zM6.600 1.100h12.800v13.800H6.600z" /><path d="M10 12.500v-4M13 12.500V5M16 12.500V8" strokeWidth="2" /></Line></ToolSlot>
        <ToolSlot $w={15} $faint><Caret s={5} /></ToolSlot>
        <ToolSlot $w={5} />
        <ToolSlot $w={17}><Line w={17} h={17} sw={1.3}><path d="M0 2h17M2 2v8h13V2M8.500 10v6M5 16h7" /></Line></ToolSlot>
        <ToolSlot $w={16} />
        <ToolSep />
        <ToolSlot $w={44}><Line w={15} h={16} sw={1.3}><circle cx="3" cy="8" r="2.400" /><circle cx="11.500" cy="3" r="2.400" /><circle cx="11.500" cy="13" r="2.400" /><path d="M5 7l4.500-3M5 9l4.500 3" /></Line></ToolSlot>
        <Grow />
        <ToolSlot $w={18}><Line w={18} h={18}><path d="M1 2.500h13l3.300 3.700L14 10H1zM9 0v2.500M9 10v7.500M6.500 17.500h5" /></Line></ToolSlot>
        <ToolSlot $w={19} />
        <ToolSlot $w={14}><svg width="14" height="16"><path d="M0 .5h11v3H0z" fill="#86709c" /><path d="M0 4.500h14v3H0z" fill="#7ea3cf" /><path d="M0 8.500h5.500v3H0z" fill="#f4a582" /><path d="M0 12.500h8v3H0z" fill="#f4667f" /></svg></ToolSlot>
        <ToolSlot $w={6} />
        <ShowMe>Show Me</ShowMe>
        <ToolSlot $w={29} />
      </ToolBar>

      <Body>
        <Side>
          <SideTabs>
            <SideTab $active>Dashboard</SideTab>
            <SideTab>Layout<Chevron d="l" s={1.2} /></SideTab>
          </SideTabs>
          <SideScroll>
            <SideMain>
              <DevicePane>
                <DeviceRow $on>Default</DeviceRow>
                <DeviceRow>Phone</DeviceRow>
                <PreviewButton>Device Preview</PreviewButton>
              </DevicePane>
              <SizePane>
                <SideHeading>Size</SideHeading>
                <SizeSelect>Custom size (1400 x 800)<Caret s={7} /></SizeSelect>
              </SizePane>
              <SheetsPane>
                <SideHeading>Sheets</SideHeading>
                <SheetList>
                  {['State wise ...', 'Area vs ...', 'Yield By Season', 'Season Based...', 'Crop Plantatio...', 'Major Crops...'].map((t, i) => (
                    <SheetRow key={t}><SheetIcon used={i < 2} />{t}</SheetRow>
                  ))}
                </SheetList>
              </SheetsPane>
              <ObjectsPane>
                <ObjectCol>
                  <SideHeading>Objects</SideHeading>
                  <ObjectList>
                    {Object.entries(objectIcons).map(([t, icon]) => (
                      <ObjectRow key={t}>
                        <svg width="15" height="15" viewBox="0 0 15 15" fill="none" stroke="#666" strokeWidth="1.100">{icon}</svg>{t}
                      </ObjectRow>
                    ))}
                  </ObjectList>
                </ObjectCol>
                <ObjectTrack $w={12}>
                  <VArrow $h={17}><svg width="7" height="4"><path d="M3.500 0L7 4H0z" fill="#aaa" /></svg></VArrow>
                  <VThumb $h={123} $c="#c1c1c1" />
                  <Grow />
                  <VArrow $h={17}><Caret s={7} /></VArrow>
                </ObjectTrack>
              </ObjectsPane>
            </SideMain>
            <VTrack $w={15}>
              <VArrow $h={17}><Chevron d="u" /></VArrow>
              <VThumb $h={477} />
              <Grow />
              <VArrow $h={17}><Chevron d="d" /></VArrow>
            </VTrack>
          </SideScroll>
        </Side>

        <Center>
          <Canvas>
            <DashTitle>Area in Across region-wise</DashTitle>
            <Regions>
              {REGIONS.map(([n, v, w]) => (
                <Region key={n}><RegionName>{n}</RegionName><RegionValue $w={w}>{v}</RegionValue></Region>
              ))}
            </Regions>
            <Panels>
              <MapPanel>
                <MapTitle>State wise Agricultural land</MapTitle>
                <MapFrame>
                  <LandMap />
                  <MapTools $top={9} $h={28}>
                    <MapTool><svg width="14" height="14" fill="none" stroke="#555" strokeWidth="1.300"><circle cx="8" cy="5.500" r="4.300" /><path d="M5 8.800L1 13" /></svg></MapTool>
                  </MapTools>
                  <MapTools $top={47} $h={110}>
                    <MapTool><svg width="10" height="10" stroke="#555" strokeWidth="1.800"><path d="M0 5h10M5 0v10" /></svg></MapTool>
                    <MapTool><svg width="10" height="10" stroke="#555" strokeWidth="1.800"><path d="M0 5h10" /></svg></MapTool>
                    <MapTool><PinShape size={13} /></MapTool>
                    <MapTool $line><svg width="7" height="11"><path d="M.5 0L7 5.500.500 11z" fill="#555" /></svg></MapTool>
                  </MapTools>
                </MapFrame>
              </MapPanel>
              <ChartPanel>
                <ChartTitle>Area vs Production</ChartTitle>
                <Chart>
                  {BARS.map(([v, n, w, c, dark]) => (
                    <BarRow key={n}>
                      <BarCell><Bar $w={w} $c={c} $dark={dark}>{v}</Bar></BarCell>
                      <BarLabel>{n}</BarLabel>
                    </BarRow>
                  ))}
                </Chart>
              </ChartPanel>
            </Panels>
            <Controls>
              <svg width="12" height="12" stroke="#fff" strokeWidth="1.300"><path d="M1 1l10 10M11 1L1 11" /></svg>
              <svg width="10" height="14" stroke="#fff" strokeWidth="1.200" fill="none"><path d="M1 .700h8M2.500.700v7.500M7.500.700v7.500M.5 8.500h9M5 8.500V14" /></svg>
              <svg width="8" height="5"><path d="M0 0h8L4 4.500z" fill="#fff" /></svg>
            </Controls>
            <Handle />
          </Canvas>
          <HScroll>
            <HArrow $w={17}><Chevron d="l" /></HArrow>
            <HThumb />
            <HTrack />
            <HArrow $w={17}><Chevron d="r" /></HArrow>
          </HScroll>
        </Center>
        <VTrack $w={16}>
          <VArrow $h={17}><Chevron d="u" /></VArrow>
          <VThumb $h={389} />
          <Grow />
          <VArrow $h={17}><Chevron d="d" /></VArrow>
          <VArrow $h={17} />
        </VTrack>
      </Body>

      <SheetTabs>
        <SheetTab $w={131} $src>
          <svg width="10" height="13" fill="none" stroke="#666"><ellipse cx="5" cy="2.500" rx="4" ry="1.700" /><path d="M1 2.500v7.500c0 2.400 8 2.400 8 0V2.500" /></svg>
          Data Source
        </SheetTab>
        <SheetTab $w={124} $clip>ason Wise prodution</SheetTab>
        {TABS.map(([t, w]) => <SheetTab key={t} $w={w}>{t}</SheetTab>)}
        <SheetTab $w={182} $on>
          <svg width="11" height="11" fill="none" stroke="#666"><path d="M.5.500h10v10H.5zM5.500.500v10M.5 5.500h10" /></svg>
          Area in Across region-wise
        </SheetTab>
        <AddTab $w={32}><svg width="16" height="16" fill="none" stroke="#666"><path d="M7 11.500H1.500v-10h10V7M4.500 9V7.500M6.500 9V5M8.500 8V6" /><path d="M11.500 8v7M8 11.500h7" strokeWidth="1.800" /></svg></AddTab>
        <AddTab $w={32}><svg width="16" height="16" fill="none" stroke="#666"><path d="M7 11.500H1.500v-10h10V7M6.500 1.500v10M1.500 6.500h10" /><path d="M11.500 8v7M8 11.500h7" strokeWidth="1.800" /></svg></AddTab>
        <AddTab $w={32}><svg width="16" height="16" fill="none" stroke="#666"><path d="M7.500 12.500l-1-.5H1.500V1.500h3l2 1 2-1h3V7M6.500 2.500v9" /><path d="M11.500 8v7M8 11.500h7" strokeWidth="1.800" /></svg></AddTab>
      </SheetTabs>
      <Status>
        <StatusCell $w={1000} /><StatusCell $w={127} /><StatusCell $w={27} /><StatusCell $w={27} /><StatusCell $w={47} />
        <StatusCell $w={71}>
          <svg width="6" height="7" fill="#555"><path d="M0 0h1v7H0zM6 0v7L1.500 3.500z" /></svg>
          <svg width="5" height="7" fill="#555"><path d="M5 0v7L.5 3.500z" /></svg>
          <svg width="5" height="7" fill="#555"><path d="M0 0v7l4.500-3.500z" /></svg>
          <svg width="6" height="7" fill="#555"><path d="M5 0h1v7H5zM0 0v7l4.500-3.500z" /></svg>
        </StatusCell>
        <Grow />
        <svg width="60" height="18" fill="#bcbcbc">
          <path d="M1 4h3v3H1zM5 4h3v3H5zM9 4h3v3H9zM1 8h3v3H1zM5 8h3v3H5zM9 8h3v3H9zM1 12h3v3H1zM5 12h3v3H5zM9 12h3v3H9zM22 4h11v6H22zM22 12h3v3h-3zM26 12h3v3h-3zM30 12h3v3h-3z" />
          <path d="M43 4h11v11H43z" fill="#666" />
        </svg>
      </Status>

      <TaskBar>
        <TaskItem $w={48}><svg width="16" height="16" fill="#fff"><path d="M0 2.300l7-1v6.200H0zM8 1.100L16 0v7.500H8zM0 8.500h7v6.200l-7-1zM8 8.500h8V16l-8-1.100z" /></svg></TaskItem>
        <SearchBox>
          <svg width="17" height="17" fill="none" stroke="#222" strokeWidth="1.400"><circle cx="10.500" cy="6.500" r="5.300" /><path d="M6.500 10.500L1 16.500" /></svg>
          <SearchText>Type here to search</SearchText>
          <svg width="72" height="38" viewBox="0 0 72 38">
            <defs><radialGradient id="gold" cx=".4" cy=".3" r=".8"><stop offset="0" stopColor="#d8c070" /><stop offset=".6" stopColor="#a88c3c" /><stop offset="1" stopColor="#6d5520" /></radialGradient></defs>
            <circle cx="19" cy="19" r="17.800" fill="url(#gold)" />
            <path d="M11 12c1-5 6-8 11-6l3 5-1 3 1 4-2 2-1 4-4 1 1 4c2 1 4 2 5 5-7 3-14 1-18-3 1-5 4-6 5-8-2-4-2-8 0-11z" fill="#80672a" />
            <path d="M15 9c3-3 8-2 9 2l-.5 3 1.500 3.500-2 .8-.8 3.700-3.700-.5-1-4-3-2z" fill="#cdb465" />
            <path d="M9 30c1-4 4-5 6-6l3 5 1 5c-4 0-7-1-10-4z" fill="#b09545" />
            <path d="M44 2l18 1-1 19-19-2z" fill="#29489c" /><path d="M46 5l14 .5-1 14-14-2z" fill="#d9ccc3" />
            <path d="M42 20l19 3-6 11-18-3z" fill="#2b4ba0" /><path d="M43 21.500l15 2.500-5 7-13-2.500z" fill="#d5cdc6" /><path d="M37 31l18 3v2l-18-3z" fill="#1c3579" /><ellipse cx="49" cy="26.500" rx="5.500" ry="3" fill="#b9b3ad" stroke="#8a8580" strokeWidth=".6" />
          </svg>
        </SearchBox>
        <TaskItem $w={51}><svg width="16" height="16" fill="none" stroke="#fff" strokeWidth="1.200"><path d="M.7 1v2h10V1M.7 5.500h10v5H.7zM.7 15v-2h10v2M14 0v5M14 8.500V16" /><path d="M14 5.500v2.500" strokeWidth="2.500" /></svg></TaskItem>
        <TaskItem $w={49} $run>
          <svg width="25" height="25" viewBox="0 0 24 24">
            <defs>
              <linearGradient id="edgeTop" x1="0" x2="1"><stop offset="0" stopColor="#2b9bea" /><stop offset=".5" stopColor="#35c6dc" /><stop offset="1" stopColor="#5edc5a" /></linearGradient>
            </defs>
            <circle cx="12" cy="12" r="11.300" fill="#1277d4" />
            <path d="M1 11C2 4 7 .7 12 .7c6 0 11.300 4.500 11.300 10 0 4-3 6-6.300 6-3 0-4-1.500-3-3 1.500-2.500 0-6.200-4.500-6.200C5.500 7.500 2 9 1 11z" fill="url(#edgeTop)" />
            <path d="M9 8.500c-3 3.500-2 10 5 12.800 3 .9 5.500-.3 7.500-2.500-4 2-10 .5-11-4-.4-2 .3-3.600 1.500-4.500C11.500 9 10 8.200 9 8.500z" fill="#0b4f9e" />
            <path d="M13.500 14c0 3 3.500 4.500 8 3l1.500 3 .5-6-3 1.800c-2.500 1-5 .7-6.500-.5z" fill="#30281f" />
          </svg>
        </TaskItem>
        <TaskItem $w={49} $run><svg width="24" height="20"><path d="M1 1h8l2 2h11v6H1z" fill="#e8a317" /><path d="M1 5h21v13H1z" fill="#fbd467" /><path d="M4.500 18v-7h14v7h-4v-3.500h-6V18z" fill="#3d92d6" /></svg></TaskItem>
        <TaskItem $w={49}><svg width="24" height="24"><path d="M7 6V4c0-3 9-3 9 0v2M9 6V4c0-2 5-2 5 0" stroke="#fff" fill="none" /><path d="M.5 6h23v15c0 1-.5 2-1.500 2H2c-1 0-1.500-1-1.500-2z" fill="#fff" /><path d="M6.500 9h5v5h-5z" fill="#f25022" /><path d="M12.500 9h5v5h-5z" fill="#7fba00" /><path d="M6.500 15h5v5h-5z" fill="#00a4ef" /><path d="M12.500 15h5v5h-5z" fill="#ffb900" /></svg></TaskItem>
        <TaskItem $w={49}><svg width="24" height="19" fill="#fff"><path d="M0 6L12 0l12 6v13H0z" /><path d="M1 6.200h22L13.500 11 19 15.500z" fill="#30281f" /></svg></TaskItem>
        <TaskItem $w={49} $run><svg width="24" height="20"><rect width="24" height="19" rx="3" fill="#fff" /><rect x="1.500" y="1.500" width="21" height="16" rx="3" fill="#1a8cff" /><rect x="4" y="4" width="16" height="11" rx="1.500" fill="#fff" /><circle cx="12" cy="9.500" r="3.600" fill="#4059d8" /></svg></TaskItem>
        <TaskItem $w={48} $run $on><svg width="24" height="23"><rect width="22" height="22" fill="#fff" /><g transform="translate(2 2)"><TableauMark size={18} mono="#4a86b0" w={1.1} /></g></svg></TaskItem>
        <TaskItem $w={50} $run>
          <svg width="25" height="25" viewBox="0 0 25 25"><path d="M.5 24.500L2 18.500C-2.500 10 3.500.5 12.500.5c6.500 0 12 5 12 11.800 0 9-9.500 14.500-17.500 10.500z" fill="#fff" /><path d="M2.800 22.200l1-4C-.2 10.500 5 2.300 12.500 2.300c5.500 0 10.200 4.300 10.200 10 0 7.700-8.200 12.500-15.500 8.700z" fill="#2cbf4c" /><path d="M8 6.500c1-.7 1.700-.2 2 .7l.8 2c0 .7-1.300 1.300-1 1.800 1 1.800 2.400 3.200 4.400 4 .8 0 1.300-1.700 2-1.500l2.300 1.100c.8.5.3 2.400-.8 3-5 2-12.500-4.500-11-9.700.2-.6.7-1.100 1.300-1.400z" fill="#fff" /></svg>
          <Badge>1</Badge>
        </TaskItem>
        <Weather>
          <svg width="23" height="22"><defs><linearGradient id="sun" x2="0" y2="1"><stop offset="0" stopColor="#f9b52a" /><stop offset="1" stopColor="#ef7622" /></linearGradient></defs><circle cx="10" cy="10.500" r="10" fill="url(#sun)" /><path d="M11 17.500c-4-.3-3-5 .3-4.500.7-4.500 6.500-4.500 7.500-1 4.500-.3 4.500 5 1 5.500z" fill="#b9d4f7" /></svg>
          <span>30°C</span><span>Mostly sunny</span>
        </Weather>
        <TaskItem $w={24}><svg width="12" height="7" fill="none" stroke="#fff" strokeWidth="1.300"><path d="M.5 6.500L6 1l5.500 5.500" /></svg></TaskItem>
        <TaskItem $w={24}><svg width="17" height="12"><path d="M4 11c-5-.3-4.500-5.500-.5-5.500C4 1 10 0 12 4c5-.5 6.500 7 1 7z" fill="#bbb" /><path d="M1 8c3-3 5-4 7-3l6 4c.5 1.500-1.500 2-3 2H4c-2 0-3-1-3-3z" fill="#fff" /></svg></TaskItem>
        <TaskItem $w={24}><svg width="15" height="10"><path d="M.6 1h12.500v8H.6z" fill="none" stroke="#fff" /><path d="M13.500 3.500H15v3h-1.500zM2.500 3h4.500v4H2.500z" fill="#fff" /></svg></TaskItem>
        <TaskItem $w={24}><svg width="13" height="13" fill="none" stroke="#fff" strokeWidth="1.100"><path d="M1 12C1 6 5 1 12 1M4 12c0-4 3-8 8-8M7 12c0-3 2-5 5-5" /><circle cx="11" cy="11" r="1.500" fill="#fff" /></svg></TaskItem>
        <TaskItem $w={22}><svg width="17" height="14" fill="none" stroke="#fff" strokeWidth="1.100"><path d="M1 5h2.500L7 1.500v11L3.500 9H1zM9 5c1 1 1 3 0 4M11.500 3c2 2 2 6 0 8M14 1c3 3 3 9 0 12" /></svg></TaskItem>
        <TrayText>ENG</TrayText>
        <Clock>05:14<br />06/10/2023</Clock>
        <TaskItem $w={40}><svg width="17" height="17"><path d="M.5 1h15.500v12h-8l-2.500 3v-3h-5z" fill="#fff" /><path d="M3 4.500h10M3 7.500h10M3 10.500h6" stroke="#2b2a20" /><circle cx="13" cy="12" r="3.500" fill="#ddd" stroke="#2b2a20" /><path d="M11 14l4-4" stroke="#2b2a20" /></svg></TaskItem>
        <PeekLine />
      </TaskBar>
    </Screen>
  );
}
